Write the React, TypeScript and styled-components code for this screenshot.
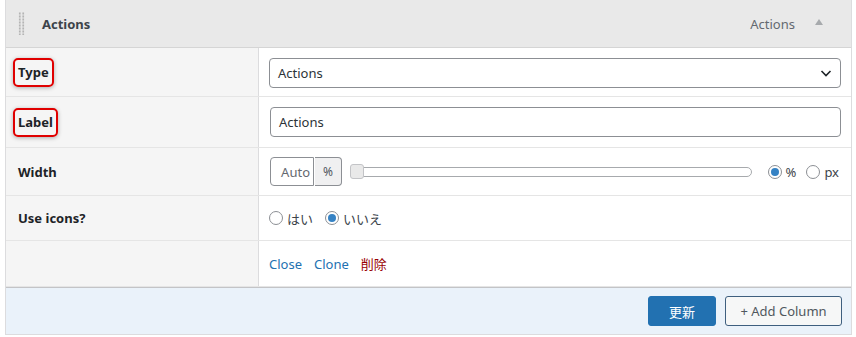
import styled, { createGlobalStyle } from "styled-components";

const GlobalStyle = createGlobalStyle`
  body {
    margin: 0;
    background: #ffffff;
    font-family: "Noto Sans", "Open Sans", "Noto Sans CJK JP", sans-serif;
    font-size: 13px;
    color: #1d2327;
  }
`;

const Page = styled.div`
  background: #ffffff;
  height: 337px;
  padding-left: 5px;
  padding-right: 4px;
  box-sizing: border-box;
`;

const Column = styled.div`
  border-left: 1px solid #dcdcde;
  border-right: 1px solid #dcdcde;
  border-bottom: 1px solid #dcdcde;
  background: #fff;
`;

const Header = styled.div`
  display: flex;
  align-items: center;
  height: 48px;
  box-sizing: border-box;
  background: #e9e9e9;
  border-bottom: 1px solid #d5d5d5;
  padding: 0 28px 0 12px;
`;

const Handle = styled.div`
  width: 7px;
  height: 23px;
  margin-right: 17px;
  background-image: radial-gradient(circle, #b4b4b4 1px, transparent 1.2px);
  background-size: 3.5px 3px;
`;

const HeaderTitle = styled.div`
  font-weight: 700;
  color: #3c434a;
  flex: 1;
`;

const HeaderType = styled.div`
  color: #646970;
  margin-right: 20px;
`;

const Toggle = styled.span`
  width: 0;
  height: 0;
  border-left: 4px solid transparent;
  border-right: 4px solid transparent;
  border-bottom: 6px solid #a7aaad;
  margin-bottom: 3px;
`;

const Row = styled.div<{ $h: number }>`
  display: grid;
  grid-template-columns: 253px 1fr;
  height: ${(p) => p.$h}px;
  box-sizing: border-box;
  border-bottom: 1px solid #e5e5e5;
`;

const LabelCell = styled.div`
  display: flex;
  align-items: center;
  background: #f5f5f5;
  border-right: 1px solid #dcdcde;
  padding-left: 12px;
  font-weight: 700;
  color: #1d2327;
`;

const Marked = styled.span`
  border: 2px solid #e00000;
  border-radius: 5px;
  padding: 3px 3px 4px;
  margin-left: -5px;
  box-shadow: 0 1px 4px rgba(0, 0, 0, 0.3);
`;

const ValueCell = styled.div`
  display: flex;
  align-items: center;
  padding: 0 10px;
  gap: 8px;
`;

const Select = styled.div`
  flex: 1;
  height: 28px;
  border: 1px solid #8c8f94;
  border-radius: 4px;
  display: flex;
  align-items: center;
  justify-content: space-between;
  padding: 0 6px 0 8px;
  margin-top: 1px;
  color: #2c3338;
`;

const TextInput = styled.div`
  flex: 1;
  height: 28px;
  border: 1px solid #8c8f94;
  border-radius: 4px;
  display: flex;
  align-items: center;
  padding: 0 8px;
  margin-left: 1px;
  color: #2c3338;
`;

const WidthGroup = styled.div`
  display: flex;
  height: 29px;
  margin-left: 1px;
`;

const AutoBox = styled.div`
  width: 44px;
  border: 1px solid #8c8f94;
  border-radius: 4px 0 0 4px;
  display: flex;
  align-items: center;
  justify-content: flex-end;
  padding-right: 3px;
  box-sizing: border-box;
  color: #646970;
`;

const Unit = styled.div`
  width: 27px;
  border: 1px solid #8c8f94;
  border-left: none;
  border-radius: 0 4px 4px 0;
  background: #f0f0f1;
  display: flex;
  align-items: center;
  justify-content: center;
  font-size: 12px;
  color: #50575e;
  box-sizing: border-box;
  margin-left: 1px;
`;

const Slider = styled.div`
  position: relative;
  flex: 1;
  height: 8px;
  border: 1px solid #a7aaad;
  border-radius: 5px;
  margin: 0 8px 0 0;
`;

const Thumb = styled.div`
  position: absolute;
  left: -1px;
  top: -4px;
  width: 12px;
  height: 13px;
  border: 1px solid #c3c4c7;
  border-radius: 3px;
  background: #e9e9e9;
`;

const RadioLabel = styled.label`
  display: inline-flex;
  align-items: center;
  gap: 4px;
  color: #3c434a;
`;

const Radio = styled.span<{ $on?: boolean }>`
  width: 14px;
  height: 14px;
  border: 1px solid #8c8f94;
  border-radius: 50%;
  box-sizing: border-box;
  display: inline-flex;
  align-items: center;
  justify-content: center;
  background: #fff;
  &::after {
    content: "";
    width: 8px;
    height: 8px;
    border-radius: 50%;
    background: ${(p) => (p.$on ? "#3582c4" : "transparent")};
  }
`;

const RadioGroup = styled.div<{ $gap: number; $end?: number }>`
  display: flex;
  align-items: center;
  gap: ${(p) => p.$gap}px;
  margin-right: ${(p) => p.$end ?? 0}px;
`;

const Link = styled.a<{ $danger?: boolean }>`
  color: ${(p) => (p.$danger ? "#990000" : "#2271b1")};
  text-decoration: none;
  margin-right: 4px;
`;

const Footer = styled.div`
  display: flex;
  justify-content: flex-end;
  align-items: center;
  gap: 9px;
  height: 46px;
  background: #eaf2fa;
  border-top: 1px solid #c3c4c7;
  padding-right: 9px;
`;

const Button = styled.button<{ $primary?: boolean; $w: number }>`
  font-family: inherit;
  font-size: 13px;
  height: 30px;
  width: ${(p) => p.$w}px;
  padding: 0;
  border-radius: 3px;
  border: 1px solid ${(p) => (p.$primary ? "#2271b1" : "#3e5f7f")};
  background: ${(p) => (p.$primary ? "#2271b1" : "#f6f7f7")};
  color: ${(p) => (p.$primary ? "#fff" : "#50575e")};
`;

const Chevron = () => (
  <svg width="16" height="16" viewBox="0 0 16 16">
    <path d="M3.5 6 L8 10.5 L12.5 6" fill="none" stroke="#1d2327" strokeWidth="1.6" />
  </svg>
);

export default function App() {
  return (
    <Page>
      <GlobalStyle />
      <Column>
        <Header>
          <Handle />
          <HeaderTitle>Actions</HeaderTitle>
          <HeaderType>Actions</HeaderType>
          <Toggle />
        </Header>
        <Row $h={49}>
          <LabelCell>
            <Marked>Type</Marked>
          </LabelCell>
          <ValueCell>
            <Select>
              Actions
              <Chevron />
            </Select>
          </ValueCell>
        </Row>
        <Row $h={51}>
          <LabelCell>
            <Marked>Label</Marked>
          </LabelCell>
          <ValueCell>
            <TextInput>Actions</TextInput>
          </ValueCell>
        </Row>
        <Row $h={48}>
          <LabelCell>Width</LabelCell>
          <ValueCell>
            <WidthGroup>
              <AutoBox>Auto</AutoBox>
              <Unit>%</Unit>
            </WidthGroup>
            <Slider>
              <Thumb />
            </Slider>
            <RadioGroup $gap={10} $end={2}>
              <RadioLabel>
                <Radio $on />%
              </RadioLabel>
              <RadioLabel>
                <Radio />
                px
              </RadioLabel>
            </RadioGroup>
          </ValueCell>
        </Row>
        <Row $h={45}>
          <LabelCell>Use icons?</LabelCell>
          <ValueCell>
            <RadioGroup $gap={12}>
              <RadioLabel>
                <Radio />
                はい
              </RadioLabel>
              <RadioLabel>
                <Radio $on />
                いいえ
              </RadioLabel>
            </RadioGroup>
          </ValueCell>
        </Row>
        <Row $h={46}>
          <LabelCell />
          <ValueCell>
            <Link href="#">Close</Link>
            <Link href="#">Clone</Link>
            <Link href="#" $danger>
              削除
            </Link>
          </ValueCell>
        </Row>
        <Footer>
          <Button $primary $w={68}>
            更新
          </Button>
          <Button $w={117}>+ Add Column</Button>
        </Footer>
      </Column>
    </Page>
  );
}
